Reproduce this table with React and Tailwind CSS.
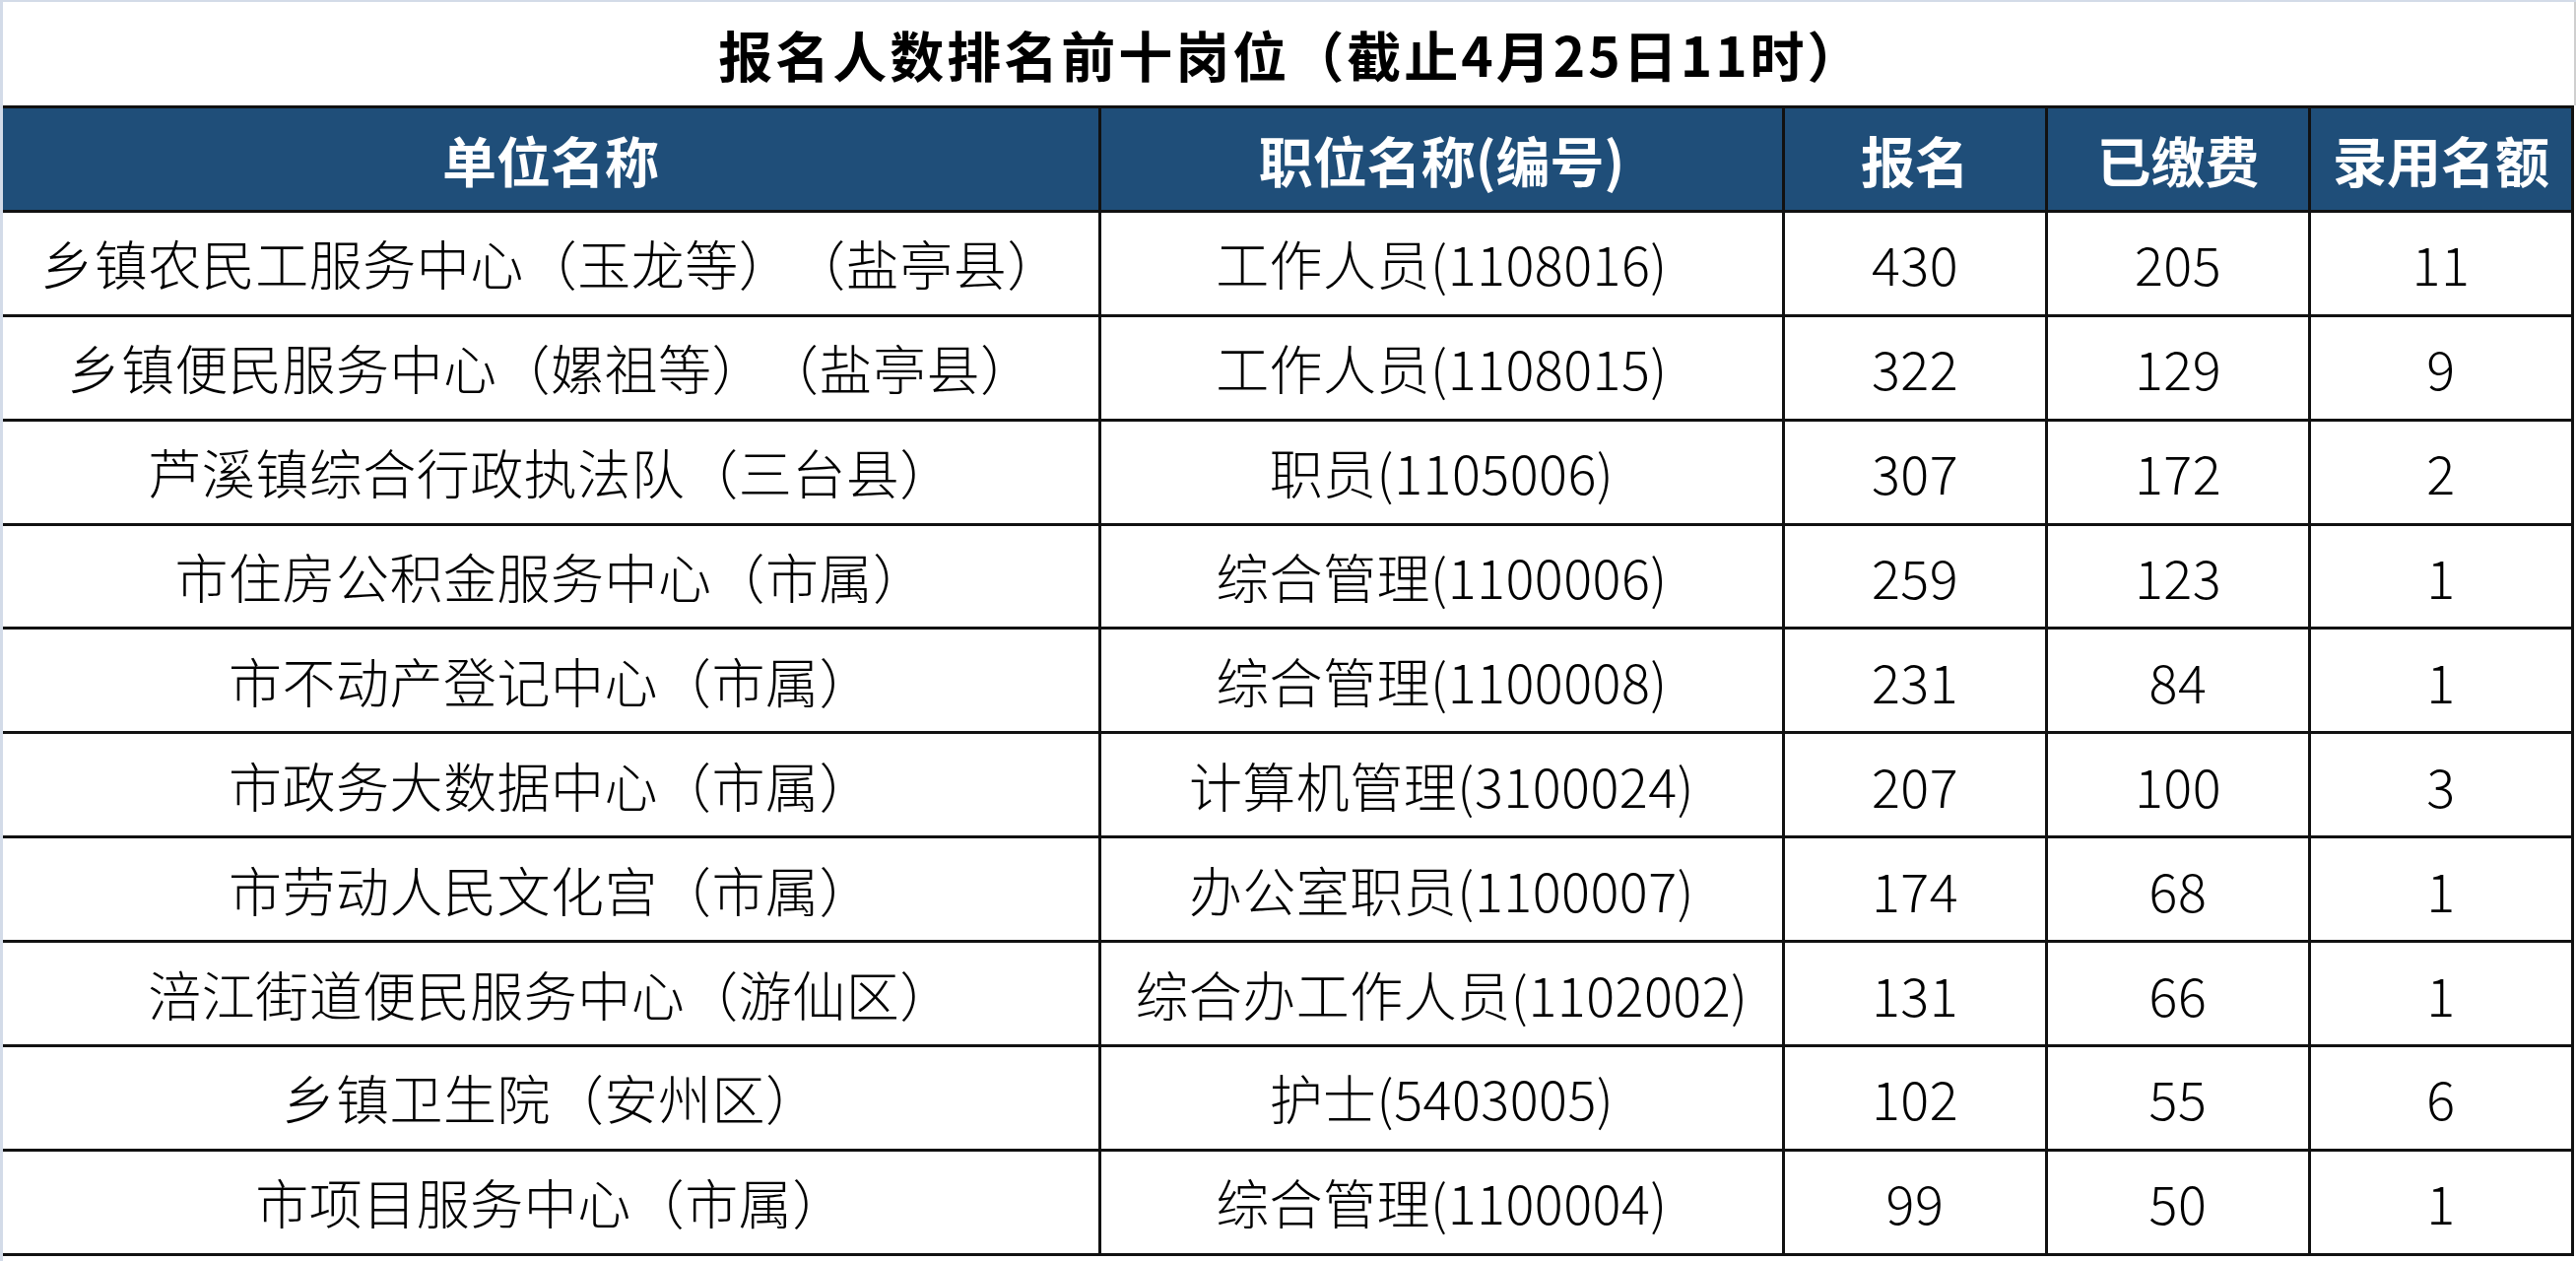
const rows = [
  ["乡镇农民工服务中心（玉龙等）（盐亭县）", "工作人员(1108016)", "430", "205", "11"],
  ["乡镇便民服务中心（嫘祖等）（盐亭县）", "工作人员(1108015)", "322", "129", "9"],
  ["芦溪镇综合行政执法队（三台县）", "职员(1105006)", "307", "172", "2"],
  ["市住房公积金服务中心（市属）", "综合管理(1100006)", "259", "123", "1"],
  ["市不动产登记中心（市属）", "综合管理(1100008)", "231", "84", "1"],
  ["市政务大数据中心（市属）", "计算机管理(3100024)", "207", "100", "3"],
  ["市劳动人民文化宫（市属）", "办公室职员(1100007)", "174", "68", "1"],
  ["涪江街道便民服务中心（游仙区）", "综合办工作人员(1102002)", "131", "66", "1"],
  ["乡镇卫生院（安州区）", "护士(5403005)", "102", "55", "6"],
  ["市项目服务中心（市属）", "综合管理(1100004)", "99", "50", "1"],
];

const headers = ["单位名称", "职位名称(编号)", "报名", "已缴费", "录用名额"];

function Cell({ children, head }) {
  return (
    <div
      className={
        "flex items-center justify-center border-r-[3px] border-b-[3px] border-[#111] whitespace-nowrap overflow-hidden " +
        (head ? "bg-[#1f4e79] text-white font-bold text-[55px]" : "bg-white text-black font-light text-[54px] tracking-[0.5px]")
      }
    >
      {children}
    </div>
  );
}

export default function App() {
  return (
    <div
      className="w-[2615px] h-[1280px] bg-white border-l-[3px] border-t-[2px] border-[#d3dbe8] overflow-hidden [text-spacing-trim:space-all]"
      style={{ fontFamily: '"Noto Sans CJK SC", "Noto Sans", sans-serif' }}
    >
      {/* title */}
      <div className="h-[105px] w-[2612px] flex items-center justify-center pl-[6px] border-r-[2px] border-[#cfcfcf] text-[55px] font-bold tracking-[3px] text-black leading-none">
        报名人数排名前十岗位（截止4月25日11时）
      </div>

      {/* table */}
      <div className="grid grid-cols-[1115px_694px_267px_267px_267px] auto-rows-[105.9px] border-t-[3px] border-[#111] w-[2610px] leading-none">
        {headers.map((h, i) => (
          <Cell key={i} head>
            {h}
          </Cell>
        ))}
        {rows.map((r, ri) =>
          r.map((c, ci) => <Cell key={ri + "-" + ci}>{c}</Cell>)
        )}
      </div>
    </div>
  );
}
